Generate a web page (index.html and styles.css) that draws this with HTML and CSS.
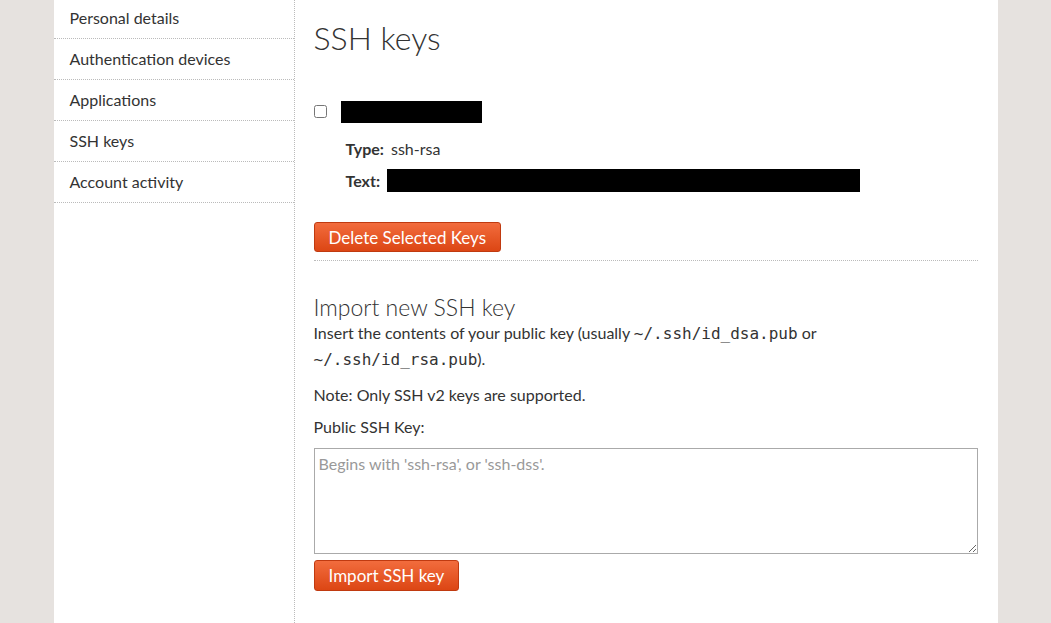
FILE: index.html
```html
<!DOCTYPE html>
<html>
<head>
<meta charset="utf-8">
<link rel="stylesheet" href="styles.css">
</head>
<body>
<div class="page">
  <nav class="sidebar">
    <ul class="nav">
      <li><a href="#">Personal details</a></li>
      <li><a href="#">Authentication devices</a></li>
      <li><a href="#">Applications</a></li>
      <li><a href="#">SSH keys</a></li>
      <li><a href="#">Account activity</a></li>
    </ul>
  </nav>
  <main class="main">
    <h1 class="title">SSH keys</h1>
    <div class="key">
      <div class="key-head">
        <input type="checkbox" class="check">
        <span class="redact redact-name"></span>
      </div>
      <dl class="key-info">
        <div class="row"><dt>Type:</dt><dd>ssh-rsa</dd></div>
        <div class="row"><dt>Text:</dt><dd><span class="redact redact-text"></span></dd></div>
      </dl>
    </div>
    <button class="btn">Delete Selected Keys</button>
    <hr class="sep">
    <h2 class="subtitle">Import new SSH key</h2>
    <p class="text">Insert the contents of your public key (usually <code>~/.ssh/id_dsa.pub</code> or <code>~/.ssh/id_rsa.pub</code>).</p>
    <p class="text note">Note: Only SSH v2 keys are supported.</p>
    <label class="label">Public SSH Key:</label>
    <textarea class="area" placeholder="Begins with 'ssh-rsa', or 'ssh-dss'."></textarea>
    <button class="btn btn-small">Import SSH key</button>
  </main>
</div>
</body>
</html>
```

FILE: styles.css
```css
html, body {
  margin: 0;
  padding: 0;
  height: 100%;
}
body {
  background: #e6e2df;
  font-family: "Lato", "Open Sans", sans-serif;
  font-weight: 400;
  color: #333;
  font-size: 16px;
  overflow: hidden;
}
.page {
  width: 944px;
  margin: 0 auto;
  background: #fff;
  display: flex;
  min-height: 100%;
}
.sidebar {
  width: 240px;
  flex: none;
  border-right: 1px dotted #bbb;
}
.nav {
  list-style: none;
  margin: -2px 0 0 0;
  padding: 0;
}
.nav li {
  border-bottom: 1px dotted #bbb;
}
.nav a {
  display: block;
  padding: 10px 16px;
  line-height: 20px;
  color: #333;
  text-decoration: none;
}
.main {
  flex: 1;
  padding: 0 20px 0 19px;
}
.title {
  font-size: 32px;
  font-weight: 300;
  margin: 18px 0 0 0;
  line-height: 40px;
}
.key {
  margin-top: 42px;
}
.key-head {
  display: flex;
  align-items: center;
  height: 24px;
}
.check {
  margin: 0 14px 0 0;
  width: 13px;
  height: 13px;
  position: relative;
  top: -1px;
}
.redact {
  display: inline-block;
  background: #000;
}
.redact-name {
  width: 141px;
  height: 22px;
}
.key-info {
  margin: 8px 0 0 32px;
}
.row {
  display: flex;
  align-items: center;
  height: 32px;
}
.row dt {
  font-weight: 700;
  margin-right: 7px;
}
.row dd {
  margin: 0;
}
.redact-text {
  width: 473px;
  height: 23px;
  vertical-align: middle;
}
.btn {
  font-family: inherit;
  font-size: 17px;
  color: #fff;
  background: linear-gradient(#f26c3d, #dc4614);
  border: 1px solid #c03a10;
  border-radius: 3px;
  padding: 0 14px;
  height: 30px;
  margin-top: 26px;
  display: block;
}
.sep {
  border: 0;
  border-top: 1px dotted #bbb;
  margin: 8px 0 0 0;
}
.subtitle {
  font-size: 23px;
  font-weight: 300;
  margin: 34px 0 0 0;
  line-height: 25px;
}
.text {
  margin: 0;
  line-height: 25px;
}
code {
  font-family: "DejaVu Sans Mono", monospace;
  font-size: 16px;
}
.note {
  margin-top: 10px;
}
.label {
  display: block;
  margin-top: 7px;
  line-height: 25px;
}
.area {
  display: block;
  box-sizing: border-box;
  width: 664px;
  height: 106px;
  margin-top: 9px;
  border: 1px solid #aaa;
  font-family: inherit;
  font-size: 16px;
  padding: 5px 4px;
  resize: vertical;
}
.area::placeholder {
  color: #999;
}
.btn-small {
  margin-top: 6px;
  height: 31px;
}
```
